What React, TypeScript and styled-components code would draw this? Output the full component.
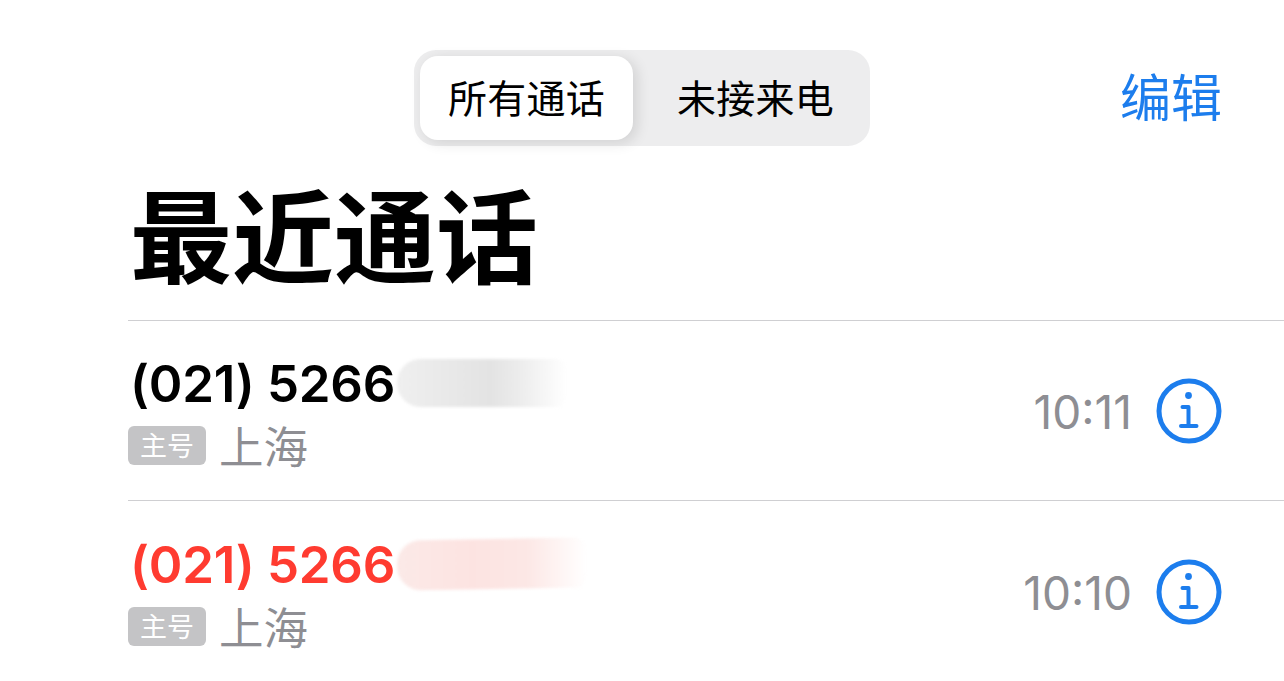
import React from "react";
import styled, { createGlobalStyle } from "styled-components";

const CJK = `"Noto Sans CJK SC", "Noto Sans", sans-serif`;

const Global = createGlobalStyle`
  html, body { margin: 0; padding: 0; background: #fff; }
  body { overflow: hidden; font-family: Inter, ${CJK}; }
`;

const Page = styled.div`
  width: 1284px;
  height: 681px;
  overflow: hidden;
  background: #fff;
`;

const TopBar = styled.header`
  display: grid;
  grid-template-columns: 1fr auto 1fr;
  align-items: center;
  padding: 50px 62px 0;
`;

const Segmented = styled.div`
  grid-column: 2;
  display: flex;
  width: 456px;
  height: 96px;
  box-sizing: border-box;
  padding: 6px;
  border-radius: 22px;
  background: #ededee;
`;

const Segment = styled.div<{ $active?: boolean }>`
  width: ${(p) => (p.$active ? "213px" : "231px")};
  box-sizing: border-box;
  display: flex;
  align-items: center;
  justify-content: center;
  padding: 0 0 3px ${(p) => (p.$active ? "0" : "14px")};
  border-radius: 18px;
  font: 400 39px/1 ${CJK};
  color: #000;
  letter-spacing: 0.3px;
  background: ${(p) => (p.$active ? "#fff" : "transparent")};
  box-shadow: ${(p) => (p.$active ? "4px 3px 14px rgba(0,0,0,0.12)" : "none")};
`;

const Edit = styled.div`
  justify-self: end;
  padding-bottom: 6px;
  font: 400 51px/1 ${CJK};
  color: #1c7ded;
`;

const Title = styled.h1`
  margin: 0;
  padding: 35px 0 0 130px;
  height: 138px;
  box-sizing: border-box;
  font: 700 102px/102px ${CJK};
  color: #000;
`;

const List = styled.div`
  margin: 0 0 0 128px;
  padding-top: 36px;
`;

const Row = styled.div`
  height: 179px;
  border-top: 1px solid #cfcfd2;
  display: flex;
  align-items: center;
  padding-right: 62px;
  &:last-child {
    height: 181px;
  }
`;

const Info = styled.div`
  flex: 1;
  display: flex;
  flex-direction: column;
  gap: 5px;
`;

const NumberLine = styled.div`
  display: flex;
  align-items: center;
  height: 64px;
  padding-top: 2px;
  box-sizing: border-box;
`;

const Phone = styled.span<{ $missed?: boolean }>`
  margin-left: 2px;
  font: 600 51px/62px Inter, "Liberation Sans", sans-serif;
  letter-spacing: -0.25px;
  color: ${(p) => (p.$missed ? "#ff3b30" : "#000")};
`;

const Smudge = styled.span<{ $missed?: boolean; $w: number }>`
  width: ${(p) => p.$w}px;
  height: ${(p) => (p.$missed ? 50 : 48)}px;
  margin: -2px 0 0 2px;
  border-radius: 24px 12px 12px 24px;
  background: ${(p) =>
    p.$missed
      ? "linear-gradient(90deg,#fbe9e7 0%,#fce3e1 40%,#fce7e5 68%,#ffffff 100%)"
      : "linear-gradient(90deg,#efefef 0%,#e3e3e3 55%,#ececec 72%,#ffffff 100%)"};
  filter: blur(1.5px);
  transform: rotate(${(p) => (p.$missed ? -1 : 0)}deg);
`;

const SubLine = styled.div`
  display: flex;
  align-items: center;
  gap: 13px;
  height: 50px;
`;

const Badge = styled.span`
  width: 78px;
  height: 39px;
  border-radius: 6px;
  background: #c4c4c6;
  color: #fff;
  display: flex;
  align-items: center;
  justify-content: center;
  padding-bottom: 2px;
  box-sizing: border-box;
  font: 400 27px/1 ${CJK};
`;

const Place = styled.span`
  font: 400 44.5px/50px ${CJK};
  color: #8e8e93;
`;

const Time = styled.span`
  font: 400 46px/1 Inter, "Liberation Sans", sans-serif;
  color: #8e8e93;
  margin: 2px 24px 0 0;
`;

const InfoIcon = () => (
  <svg width="66" height="66" viewBox="0 0 66 66" fill="none" stroke="#1c7ded" aria-hidden="true">
    <circle cx="33" cy="33" r="30" strokeWidth="5" />
    <circle cx="32.5" cy="17.5" r="3.4" fill="#1c7ded" stroke="none" />
    <path d="M26.5 29h6v19M25 48h15.5" strokeWidth="4" strokeLinecap="round" strokeLinejoin="round" />
  </svg>
);

const calls = [
  { id: 1, time: "10:11", missed: false, w: 170 },
  { id: 2, time: "10:10", missed: true, w: 190 },
];

export default function App() {
  return (
    <Page>
      <Global />
      <TopBar>
        <Segmented>
          <Segment $active>所有通话</Segment>
          <Segment>未接来电</Segment>
        </Segmented>
        <Edit>编辑</Edit>
      </TopBar>
      <Title>最近通话</Title>
      <List>
        {calls.map((c) => (
          <Row key={c.id}>
            <Info>
              <NumberLine>
                <Phone $missed={c.missed}>(021) 5266</Phone>
                <Smudge $missed={c.missed} $w={c.w} />
              </NumberLine>
              <SubLine>
                <Badge>主号</Badge>
                <Place>上海</Place>
              </SubLine>
            </Info>
            <Time>{c.time}</Time>
            <InfoIcon />
          </Row>
        ))}
      </List>
    </Page>
  );
}
